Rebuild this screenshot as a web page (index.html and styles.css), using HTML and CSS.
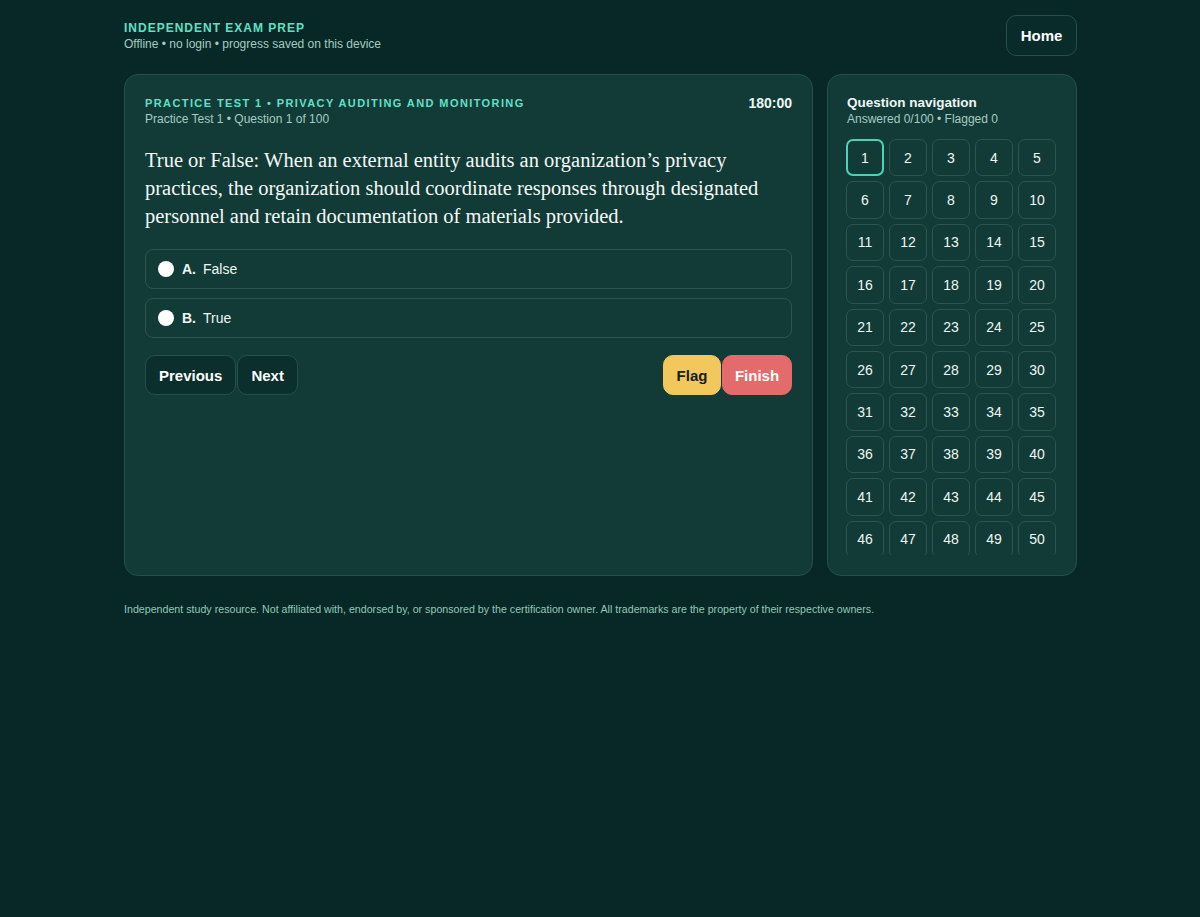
FILE: index.html
```html
<!DOCTYPE html>
<html lang="en">
<head>
  <meta charset="UTF-8" />
  <meta name="viewport" content="width=device-width, initial-scale=1.0" />
  <title>Practice Test 1</title>
  <link rel="stylesheet" href="styles.css">
</head>
<body>
  <div class="wrap">
    <header class="topbar">
      <div>
        <div class="brand">Independent Exam Prep</div>
        <div class="tagline">Offline • no login • progress saved on this device</div>
      </div>
      <button class="btn home-btn">Home</button>
    </header>

    <main class="layout">
      <section class="card quiz">
        <div class="quiz-head">
          <div>
            <div class="kicker">Practice Test 1 • Privacy Auditing and Monitoring</div>
            <div class="meta">Practice Test 1 • Question 1 of 100</div>
          </div>
          <div class="timer">180:00</div>
        </div>

        <p class="question">True or False: When an external entity audits an organization’s privacy practices, the organization should coordinate responses through designated personnel and retain documentation of materials provided.</p>

        <label class="option">
          <input type="radio" name="answer" />
          <span class="opt-letter">A.</span> False
        </label>
        <label class="option">
          <input type="radio" name="answer" />
          <span class="opt-letter">B.</span> True
        </label>

        <div class="actions">
          <div class="group">
            <button class="btn">Previous</button>
            <button class="btn">Next</button>
          </div>
          <div class="group">
            <button class="btn flag-btn">Flag</button>
            <button class="btn finish-btn">Finish</button>
          </div>
        </div>
      </section>

      <aside class="card nav">
        <div class="nav-title">Question navigation</div>
        <div class="meta">Answered 0/100 • Flagged 0</div>
        <div class="nav-scroll">
          <div class="nav-grid" id="nav-grid"></div>
        </div>
      </aside>
    </main>

    <footer class="footer">Independent study resource. Not affiliated with, endorsed by, or sponsored by the certification owner. All trademarks are the property of their respective owners.</footer>
  </div>

  <script>
    const grid = document.getElementById('nav-grid');
    for (let i = 1; i <= 100; i++) {
      const b = document.createElement('button');
      b.className = 'qnum' + (i === 1 ? ' current' : '');
      b.textContent = i;
      grid.appendChild(b);
    }
  </script>
</body>
</html>
```

FILE: styles.css
```css
* {
  box-sizing: border-box;
}

body {
  margin: 0;
  background: #072826;
  color: #eef6f3;
  font-family: "Liberation Sans", Arial, sans-serif;
}

.wrap {
  max-width: 1000px;
  margin: 0 auto;
  padding: 15px 23px 15px 24px;
}

.topbar {
  display: flex;
  justify-content: space-between;
  align-items: center;
  margin-bottom: 18px;
}

.brand {
  color: #5fe0c6;
  font-size: 12px;
  font-weight: bold;
  letter-spacing: 1px;
  text-transform: uppercase;
  line-height: 16px;
}

.tagline {
  color: #a6cbc2;
  font-size: 12px;
  line-height: 16px;
}

.btn {
  font-family: "Liberation Sans", Arial, sans-serif;
  font-size: 15px;
  font-weight: bold;
  color: #ffffff;
  background: #0b2f2c;
  border: 1px solid #24504a;
  border-radius: 10px;
  height: 40px;
  padding: 0 13px;
  cursor: pointer;
}

.home-btn {
  width: 71px;
  height: 41px;
  background: #092b29;
}

.layout {
  display: grid;
  grid-template-columns: 1fr 250px;
  gap: 14px;
}

.card {
  background: #123b38;
  border: 1px solid #24504b;
  border-radius: 14px;
  padding: 20px;
  height: 502px;
}

.quiz-head {
  display: flex;
  justify-content: space-between;
  align-items: flex-start;
}

.kicker {
  color: #5fe0c6;
  font-size: 11px;
  font-weight: bold;
  letter-spacing: 1.4px;
  text-transform: uppercase;
  line-height: 16px;
}

.meta {
  color: #a6cbc2;
  font-size: 12px;
  line-height: 16px;
}

.timer {
  font-size: 14px;
  font-weight: bold;
  line-height: 16px;
}

.question {
  font-family: "Liberation Serif", Georgia, serif;
  font-size: 20.5px;
  line-height: 28px;
  margin: 19px 0 19px;
  color: #f4f8f6;
}

.option {
  display: flex;
  align-items: center;
  height: 40px;
  padding: 0 12px;
  margin-bottom: 9px;
  border: 1px solid #2a5550;
  border-radius: 8px;
  background: #123b38;
  font-size: 14px;
  cursor: pointer;
}

.option input {
  appearance: none;
  width: 16px;
  height: 16px;
  margin: 0 8px 0 0;
  border-radius: 50%;
  background: #ffffff;
}

.opt-letter {
  font-weight: bold;
  margin-right: 7px;
}

.actions {
  display: flex;
  justify-content: space-between;
  margin-top: 17px;
}

.group {
  display: flex;
  gap: 1px;
}

.flag-btn {
  width: 58px;
  padding: 0;
  background: #f2c75c;
  border-color: #f2c75c;
  color: #12201e;
}

.finish-btn {
  width: 70px;
  padding: 0;
  background: #e46b6b;
  border-color: #e46b6b;
}

.nav {
  display: flex;
  flex-direction: column;
  padding-left: 18px;
}

.nav-title {
  font-size: 13.5px;
  font-weight: bold;
  line-height: 16px;
  padding-left: 1px;
}

.nav .meta {
  padding-left: 1px;
}

.nav-scroll {
  margin-top: 12px;
  flex: 1;
  min-height: 0;
  overflow: auto;
  scrollbar-width: none;
}

.nav-grid {
  display: grid;
  grid-template-columns: repeat(5, 1fr);
  grid-auto-rows: 37.4px;
  gap: 5px;
}

.qnum {
  font-family: "Liberation Sans", Arial, sans-serif;
  font-size: 14px;
  color: #eef6f3;
  background: #123b38;
  border: 1px solid #2a5550;
  border-radius: 7px;
  cursor: pointer;
}

.qnum.current {
  border: 2px solid #4fd1b5;
}

.footer {
  margin-top: 27px;
  color: #8fc9b8;
  font-size: 10.66px;
}
```
